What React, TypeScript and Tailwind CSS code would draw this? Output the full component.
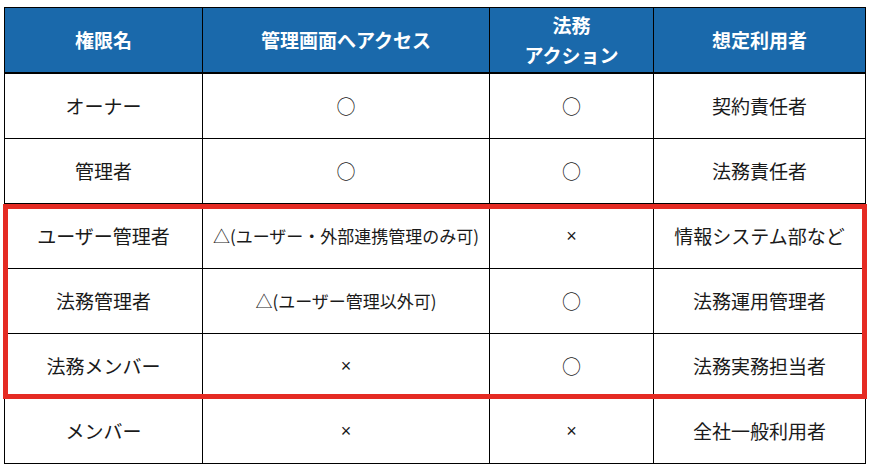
import React from "react";

const cols = "grid grid-cols-[197px_286px_163px_211px] gap-x-px bg-black";

type Row = { name: string; admin: string; legal: string; user: string; small?: boolean };

const rows: Row[] = [
  { name: "オーナー", admin: "○", legal: "○", user: "契約責任者" },
  { name: "管理者", admin: "○", legal: "○", user: "法務責任者" },
  { name: "ユーザー管理者", admin: "△(ユーザー・外部連携管理のみ可)", legal: "×", user: "情報システム部など", small: true },
  { name: "法務管理者", admin: "△(ユーザー管理以外可)", legal: "○", user: "法務運用管理者", small: true },
  { name: "法務メンバー", admin: "×", legal: "○", user: "法務実務担当者" },
  { name: "メンバー", admin: "×", legal: "×", user: "全社一般利用者" },
];

function Cell({ children, className = "" }: { children: React.ReactNode; className?: string }) {
  return <div className={`flex items-center justify-center text-center ${className}`}>{children}</div>;
}

// × は半角の小さい記号で表示
function Mark({ v }: { v: string }) {
  if (v === "×") return <span className="font-['Liberation_Sans',sans-serif] text-[18px]">×</span>;
  return <>{v}</>;
}

export default function App() {
  return (
    <div className="w-[873px] h-[471px] bg-white pl-[4px] pt-[7px] font-['Noto_Sans_CJK_JP','Noto_Sans',sans-serif]">
      <div className="relative w-[862px]">
        <div className="border border-black">
          {/* ヘッダー */}
          <div className={`${cols} border-b-2 border-black`}>
            {["権限名", "管理画面へアクセス", "法務\nアクション", "想定利用者"].map((h) => (
              <Cell key={h} className="h-[64px] bg-[#1a69ab] text-white font-bold text-[19px] leading-[30px] whitespace-pre-line">
                {h}
              </Cell>
            ))}
          </div>
          {/* 本文 */}
          <div className="flex flex-col gap-y-px bg-black">
            {rows.map((r) => (
              <div key={r.name} className={cols}>
                <Cell className="h-[64px] bg-white text-[19px] text-[#1a1a1a]">{r.name}</Cell>
                <Cell className={`h-[64px] bg-white text-[#1a1a1a] ${r.small ? "text-[17px]" : "text-[19px]"}`}>
                  <Mark v={r.admin} />
                </Cell>
                <Cell className="h-[64px] bg-white text-[19px] text-[#1a1a1a]">
                  <Mark v={r.legal} />
                </Cell>
                <Cell className="h-[64px] bg-white text-[19px] text-[#1a1a1a]">{r.user}</Cell>
              </div>
            ))}
          </div>
        </div>
        {/* 強調枠 */}
        <div className="absolute left-[-1px] top-[197px] w-[864px] h-[195px] border-[5px] border-[#e52b23] pointer-events-none" />
      </div>
    </div>
  );
}
